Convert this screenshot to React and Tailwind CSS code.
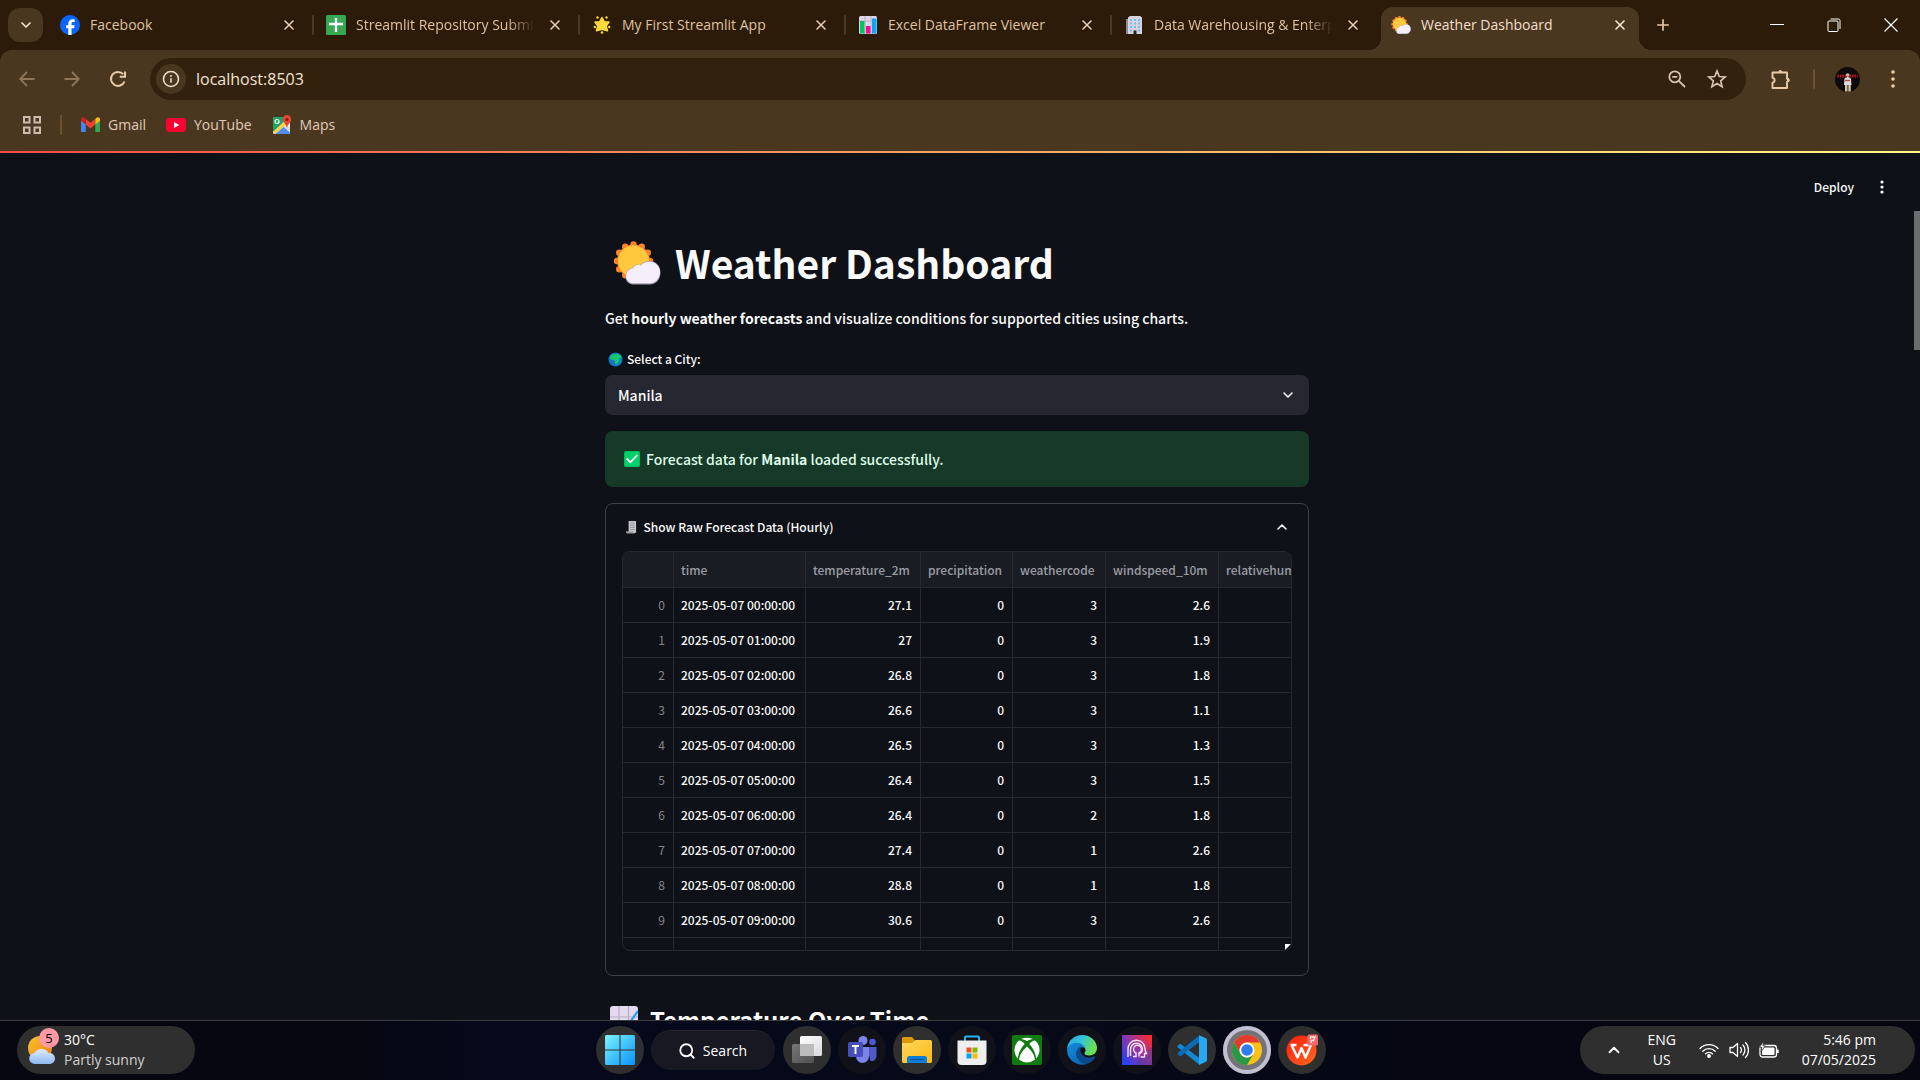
import React from "react";
import { ChevronDown, ChevronUp, X, Plus, Search } from "lucide-react";

const CHROME_FONT = "font-['Open_Sans','Noto_Sans',sans-serif]";
const PAGE_FONT = "font-['Noto_Sans_CJK_JP','Noto_Sans',sans-serif]";

/* ---------- emoji-style drawings ---------- */

function SunCloud({ className }) {
  const petals = Array.from({ length: 12 }, (_, i) => (i * Math.PI) / 6);
  return (
    <svg viewBox="0 0 48 48" className={className} aria-hidden="true">
      <g fill="#ff822d">
        <circle cx="20.500" cy="22" r="16.500" />
        {petals.map((a) => (
          <circle key={a} cx={20.5 + 16.5 * Math.cos(a)} cy={22 + 16.5 * Math.sin(a)} r="3.200" />
        ))}
      </g>
      <circle cx="20.500" cy="22" r="15.500" fill="#ffc83d" />
      <path d="M19 45.500a7.500 7.500 0 0 1-6.500-8c0-5 3.500-8 7-8.500 1-3.500 6-4.500 8-2.500 2-3.500 6-4.500 9-4.500 6 0 11 4.500 11 11.500S43 45.500 37 45.500z" fill="#a89bb5" />
      <path d="M19 44.200a7 7 0 0 1-6-7c0-4.500 3.500-7.500 7-8 1-3.500 6-4.500 8-2.500 2-3.500 6-4 8.500-4 6 0 10.500 4.500 10.500 10.500s-4.500 11-10 11z" fill="#f4effa" />
    </svg>
  );
}

function Globe({ className }) {
  return (
    <svg viewBox="0 0 16 16" className={className} aria-hidden="true">
      <circle cx="8" cy="8" r="7.500" fill="#0f76c9" />
      <path d="M3 3.500 6 2l3 .500 1.500-1L13 3l1.500 3-1.500 1-1-.5.500 2-2 3.500-1.500 1.500-1.500-1L7.500 10 6 8.500 3 8 2 6z" fill="#12c76f" />
      <path d="m12.500 10 1-.5-.5 2-1 .800z" fill="#12c76f" />
    </svg>
  );
}

function CheckBoxEmoji({ className }) {
  return (
    <svg viewBox="0 0 16 16" className={className} aria-hidden="true">
      <rect width="16" height="16" rx="1.500" fill="#00b25b" />
      <rect x=".7" y=".7" width="14.600" height="14.600" rx="1.200" fill="#00d26a" />
      <path d="m3.200 8 3.200 3.300 6.400-6.800" fill="none" stroke="#fff" strokeWidth="1.800" strokeLinecap="round" strokeLinejoin="round" />
    </svg>
  );
}

function Receipt({ className }) {
  return (
    <svg viewBox="0 0 12 16" className={className} aria-hidden="true">
      <path d="M3 1h8.500v13.500H10V15H1.500A1.500 1.500 0 0 1 0 13.500h3z" fill="#c9c9cc" />
      <path d="M0 13h8.500c0 1.200.5 2 1.500 2H1.500A1.500 1.500 0 0 1 0 13z" fill="#9a9aa0" />
      <path d="M4.500 3.500h5.500M4.500 6h5.500M4.500 8.500h5.500M4.500 11h5.500" stroke="#8c8c92" strokeWidth="1" />
    </svg>
  );
}

function ChartUp({ className }) {
  return (
    <svg viewBox="0 0 28 28" className={className} aria-hidden="true">
      <rect width="28" height="28" rx="3" fill="#e4dbee" />
      <path d="M0 11h28M0 20h28M9 0v28M18.500 0v28" stroke="#b9abc9" strokeWidth="1.200" />
      <path d="m2 27 7-5 6 1L28 5" fill="none" stroke="#26a0f0" strokeWidth="2.200" />
    </svg>
  );
}

/* ---------- tab icons ---------- */

function FacebookIcon() {
  return (
    <svg viewBox="0 0 20 20" className="size-5" aria-hidden="true">
      <circle cx="10" cy="10" r="10" fill="#0866ff" />
      <path d="M8.300 19.900v-6.600H6.200v-3h2.100V9c0-3.300 1.500-4.800 4.700-4.800.6 0 1.300.1 1.700.2v2.700h-1.200c-1.500 0-2 .6-2 2.100v1.100h3.100l-.5 3h-2.600v6.600z" fill="#fff" />
    </svg>
  );
}
function SheetIcon() {
  return (
    <svg viewBox="0 0 20 20" className="size-5" aria-hidden="true">
      <rect width="20" height="20" rx="1.500" fill="#34a853" />
      <path d="M8.800 3h2.400v4.800H17v2.400h-5.800V17H8.800v-6.800H3V7.800h5.800z" fill="#fff" />
    </svg>
  );
}
function StarIcon() {
  return (
    <svg viewBox="0 0 20 20" className="size-5" aria-hidden="true">
      <path d="m10 2.500 2.200 4.200 4.800.3-2.800 4 1.300 4.800-5.500-1.500-5.500 1.500L5.800 11 3 7l4.800-.3z" fill="#ffd93b" stroke="#ffd93b" strokeWidth="1.500" strokeLinejoin="round" />
      <g fill="#ffd93b">
        <circle cx="5.500" cy="2.500" r="1.200" /><circle cx="14.500" cy="2.500" r="1.200" />
        <circle cx="2.800" cy="12" r="1.200" /><circle cx="17.200" cy="12" r="1.200" />
        <circle cx="10" cy="17.500" r="1.300" />
      </g>
    </svg>
  );
}
function BarsIcon() {
  return (
    <svg viewBox="0 0 20 20" className="size-5" aria-hidden="true">
      <rect x="1" y="1" width="18" height="18" rx="1.500" fill="#dfd5e8" />
      <path d="M1 6h18M7 1v18M13 1v18" stroke="#bcaec9" />
      <path d="M2 6h4.500v12.500H2z" fill="#00c468" />
      <path d="M8 11h4.500v7.500H8z" fill="#f70a8d" />
      <path d="M14 3.500h4.500v15H14z" fill="#0aa7f5" />
    </svg>
  );
}
function OfficeIcon() {
  return (
    <svg viewBox="0 0 20 20" className="size-5" aria-hidden="true">
      <path d="M2 4h3v15H2z" fill="#8f8b95" />
      <path d="M4 2.500 6 1h10l2 1.500V19H4z" fill="#d8d3dd" />
      <path d="M6 4h2v2H6zm4 0h2v2h-2zm4 0h2v2h-2zM6 7.500h2v2H6zm4 0h2v2h-2zm4 0h2v2h-2zM6 11h2v2H6zm4 0h2v2h-2zm4 0h2v2h-2zM6 14.500h2v2H6zm8 0h2v2h-2z" fill="#6fbdf5" />
      <path d="M9.500 15.500h3V19h-3z" fill="#222" />
    </svg>
  );
}

const tabs = [
  { title: "Facebook", icon: <FacebookIcon /> },
  { title: "Streamlit Repository Submission", icon: <SheetIcon />, sep: true, fade: true },
  { title: "My First Streamlit App", icon: <StarIcon />, sep: true },
  { title: "Excel DataFrame Viewer", icon: <BarsIcon />, sep: true },
  { title: "Data Warehousing & Enterprise", icon: <OfficeIcon />, sep: true, fade: true },
  { title: "Weather Dashboard", icon: <SunCloud className="size-5" />, active: true },
];

function Tab({ tab }) {
  return (
    <div role="tab" aria-selected={!!tab.active} className={"relative flex h-full w-[266px] items-center " + (tab.active ? "ml-px" : "")}>
      {tab.active && (
        <div className="absolute inset-x-1 top-[7px] bottom-0 rounded-t-xl bg-[#4a3720]">
          <div className="absolute bottom-0 -left-3 size-3 bg-[radial-gradient(circle_at_top_left,transparent_12px,#4a3720_12px)]" />
          <div className="absolute bottom-0 -right-3 size-3 bg-[radial-gradient(circle_at_top_right,transparent_12px,#4a3720_12px)]" />
        </div>
      )}
      <div className={tab.sep ? "h-5 w-0.5 shrink-0 rounded bg-[#4d3a22]" : "w-0.5 shrink-0"} />
      <div className="relative ml-3 flex min-w-0 flex-1 items-center gap-2.5">
        <span className="shrink-0">{tab.icon}</span>
        <span
          className={
            "min-w-0 flex-1 overflow-hidden text-[14px] leading-5 whitespace-nowrap " +
            (tab.fade ? "[mask-image:linear-gradient(to_right,black_85%,transparent)] " : "") +
            (tab.active ? "text-[#f5dfcd]" : "text-[#dfc1a2]")
          }
        >
          {tab.title}
        </span>
        <button aria-label="Close tab" className={"mr-[13px] flex size-5 shrink-0 items-center justify-center " + (tab.active ? "text-[#fbe9da]" : "text-[#e6cdb4]")}>
          <X size={16} strokeWidth={2.400} />
        </button>
      </div>
    </div>
  );
}

function TabStrip() {
  return (
    <div className="flex h-[50px] items-center bg-[#2c1b09]">
      <button aria-label="Search tabs" className="mr-[3px] ml-2 flex h-[34px] w-[35px] shrink-0 items-center justify-center rounded-xl bg-[#4a3720] text-[#f5dfcd]">
        <ChevronDown size={16} strokeWidth={2.600} />
      </button>
      <div role="tablist" className="flex h-full min-w-0">
        {tabs.map((t) => <Tab key={t.title} tab={t} />)}
      </div>
      <button aria-label="New tab" className="ml-2 flex size-6 shrink-0 items-center justify-center text-[#e6c9a8]">
        <Plus size={18} strokeWidth={2.200} />
      </button>
      <div className="ml-auto flex text-white">
        <button aria-label="Minimize" className="flex h-10 w-[57px] items-center justify-center">
          <svg viewBox="0 0 14 14" className="w-3.5" aria-hidden="true"><path d="M0 6.500h14" stroke="currentColor" strokeWidth="1" /></svg>
        </button>
        <button aria-label="Restore" className="flex h-10 w-[57px] items-center justify-center">
          <svg viewBox="0 0 14 14" className="w-3.5" fill="none" stroke="currentColor" aria-hidden="true">
            <rect x="1" y="3" width="10" height="10.500" rx="1" />
            <path d="M3.500 1h8A1.500 1.500 0 0 1 13 2.500V11" />
          </svg>
        </button>
        <button aria-label="Close window" className="flex h-10 w-[58px] items-center justify-center">
          <svg viewBox="0 0 14 14" className="w-3.5" aria-hidden="true"><path d="m.5.500 13 13m0-13-13 13" stroke="currentColor" strokeWidth="1.200" /></svg>
        </button>
      </div>
    </div>
  );
}

function ArrowIcon({ flip }) {
  return (
    <svg viewBox="0 0 16 16" className={flip ? "size-4 rotate-180" : "size-4"} fill="none" stroke="currentColor" strokeWidth="1.800" aria-hidden="true">
      <path d="M15.500 8H1.500M8 1 1.200 8 8 15" />
    </svg>
  );
}

function Toolbar() {
  return (
    <div className="bg-[#2c1b09]">
      <div className="rounded-t-xl bg-[#4a3720] pt-2">
        <div className="flex h-[42px] items-center">
          <button aria-label="Back" className="flex w-[54px] justify-center text-[#8d7659]"><ArrowIcon /></button>
          <button aria-label="Forward" className="flex w-9 justify-center text-[#8d7659]"><ArrowIcon flip /></button>
          <button aria-label="Reload" className="flex w-[55px] justify-center text-[#e9cba9]">
            <svg viewBox="0 0 18 18" className="size-[18px]" fill="none" stroke="currentColor" strokeWidth="2" aria-hidden="true">
              <path d="M15.500 11.500a7 7 0 1 1-1.300-7.300" /><path d="M16 1.500v5.300h-5.300" />
            </svg>
          </button>
          <div className="ml-[5px] flex h-full min-w-0 flex-1 items-center rounded-full bg-[#32210d] pr-[17px] pl-1.5">
            <button aria-label="View site information" className="flex size-[30px] shrink-0 items-center justify-center rounded-full bg-[#4a3720] text-[#f0dccb]">
              <svg viewBox="0 0 18 18" className="size-[18px]" fill="none" stroke="currentColor" strokeWidth="1.600" aria-hidden="true">
                <circle cx="9" cy="9" r="7.500" /><path d="M9 8.200v4.600M9 5v1.800" />
              </svg>
            </button>
            <input aria-label="Address" defaultValue="localhost:8503" className="ml-2.5 min-w-0 flex-1 bg-transparent text-[16px] leading-6 text-[#f3e3d6] outline-none" />
            <button aria-label="Zoom" className="flex w-9 justify-center text-[#d9c3b4]">
              <svg viewBox="0 0 18 18" className="size-[18px]" fill="none" stroke="currentColor" strokeWidth="1.800" aria-hidden="true">
                <circle cx="6.800" cy="6.800" r="5.500" /><path d="M4.300 6.800h5M10.800 10.800l6.200 6.200" />
              </svg>
            </button>
            <button aria-label="Bookmark this page" className="ml-2.5 flex w-6 justify-center text-[#d9c3b4]">
              <svg viewBox="0 0 20 20" className="size-5" fill="none" stroke="currentColor" strokeWidth="1.700" aria-hidden="true">
                <path d="m10 2 2.300 5.500 5.900.5-4.500 3.900 1.400 5.800L10 14.600l-5.100 3.100 1.400-5.800L1.800 8l5.900-.5z" />
              </svg>
            </button>
          </div>
          <button aria-label="Extensions" className="ml-[23px] flex w-6 justify-center text-[#e9cba9]">
            <svg viewBox="0 0 22 22" className="size-[22px]" fill="none" stroke="currentColor" strokeWidth="1.900" strokeLinejoin="round" aria-hidden="true">
              <path d="M2.500 4.500H17v6.200a1.500 1.500 0 0 1 0 3V20H2.500v-5.200a2.600 2.600 0 0 0 0-5.100z" />
              <path d="M8.700 3.600a1.700 1.700 0 0 1 3.200 0zM18 10.500a1.700 1.700 0 0 1 0 3.300z" fill="currentColor" strokeWidth="1" />
            </svg>
          </button>
          <div className="ml-5 h-5 w-0.5 rounded bg-[#6b5233]" />
          <button aria-label="Profile" className="ml-5 size-[25px]">
            <svg viewBox="0 0 25 25" className="size-[25px]" aria-hidden="true">
              <circle cx="12.500" cy="12.500" r="12.500" fill="#0c0a0a" />
              <path d="M2.500 9h20" stroke="#b3161b" strokeWidth="3" strokeDasharray="1.600 .8" />
              <circle cx="12.700" cy="8" r="1.800" fill="#d6b7a2" />
              <path d="M9.500 11.500q3.200-3 6.400 0l.6 6.500h-7.500z" fill="#e2dedd" />
              <path d="M10 13.500h5" stroke="#c04a45" strokeWidth="1.500" />
              <path d="M10 18h2.500v6.500H10zm3.300 0h2.500v6.500h-2.500z" fill="#d1c3a6" />
            </svg>
          </button>
          <button aria-label="Chrome menu" className="mr-[15px] ml-[21px] flex w-6 justify-center text-[#f0cfa9]">
            <svg viewBox="0 0 4 18" className="h-[18px]" fill="currentColor" aria-hidden="true"><circle cx="2" cy="2" r="1.800" /><circle cx="2" cy="9" r="1.800" /><circle cx="2" cy="16" r="1.800" /></svg>
          </button>
        </div>
        <nav className="flex h-[51px] items-center pb-0.5 text-[14px] leading-5 text-[#e0ccb8]">
          <button aria-label="Apps" className="ml-[23px]">
            <svg viewBox="0 0 18 18" className="size-[18px]" fill="none" stroke="#cdbcab" strokeWidth="2" aria-hidden="true">
              <path d="M1 1h5.500v5.500H1zM11.500 1H17v5.500h-5.500zM1 11.500h5.500V17H1zM11.500 11.500H17V17h-5.500z" />
            </svg>
          </button>
          <div className="mx-[19px] h-5 w-0.5 rounded bg-[#6b5233]" />
          <a href="#gmail" className="flex items-center gap-2">
            <svg viewBox="0 0 20 16" className="w-[19px]" aria-hidden="true">
              <path d="M0 3v11.500A1.500 1.500 0 0 0 1.500 16H5V7z" fill="#4285f4" />
              <path d="M20 3v11.500a1.500 1.500 0 0 1-1.500 1.500H15V7z" fill="#34a853" />
              <path d="M15 2v6l5-4V2.500c0-2-2.300-3-3.800-1.600z" fill="#fbbc04" />
              <path d="M5 8V2l5 4 5-4v6l-5 4z" fill="#ea4335" />
              <path d="M0 2.500V4l5 4V2L3.800.9C2.300-.3 0 .6 0 2.500z" fill="#c5221f" />
            </svg>
            Gmail
          </a>
          <a href="#youtube" className="ml-5 flex items-center gap-2">
            <svg viewBox="0 0 20 14" className="w-5" aria-hidden="true"><rect width="20" height="14" rx="3.500" fill="#ff0033" /><path d="m8 4 5.300 3L8 10z" fill="#fff" /></svg>
            YouTube
          </a>
          <a href="#maps" className="ml-5 flex items-center gap-2">
            <svg viewBox="0 0 20 20" className="size-5" aria-hidden="true">
              <rect x="1" y="2" width="17" height="17" rx="1.500" fill="#f2f2f2" />
              <path d="M1 3.500A1.500 1.500 0 0 1 2.500 2H12v5L1 17z" fill="#1fa463" />
              <path d="m9.500 10 8.500 7.500c0 1-.5 1.500-1.500 1.500H3z" fill="#4f8df5" />
              <path d="M1 17 12 6.500l2.500 3L3.500 19H2.500z" fill="#fbd24c" />
              <path d="m12 12 2.500-2.500L18 13v3.500z" fill="#d8dadd" />
              <circle cx="5" cy="6.500" r="2" fill="none" stroke="#fff" strokeWidth="1.200" />
              <path d="M15 0a4.300 4.300 0 0 1 4.200 4.400c0 3-3.200 4-4.200 8.400-1-4.400-4.200-5.400-4.200-8.400A4.300 4.300 0 0 1 15 0z" fill="#ea4335" />
              <circle cx="15" cy="4.400" r="1.500" fill="#7a1d17" />
            </svg>
            Maps
          </a>
        </nav>
      </div>
    </div>
  );
}

/* ---------- page content ---------- */

const columns = ["time", "temperature_2m", "precipitation", "weathercode", "windspeed_10m", "relativehumidity_2m"];
const rows = [
  ["27.1", 3, "2.6"], ["27", 3, "1.9"], ["26.8", 3, "1.8"], ["26.6", 3, "1.1"], ["26.5", 3, "1.3"],
  ["26.4", 3, "1.5"], ["26.4", 2, "1.8"], ["27.4", 1, "2.6"], ["28.8", 1, "1.8"], ["30.6", 3, "2.6"],
];
const CELL = "border-r border-b border-[#262931] px-2 text-right";

function ForecastTable() {
  return (
    <div className="relative h-[400px] overflow-hidden rounded-lg border border-[#262931]">
      <table className="w-[760px] table-fixed border-separate border-spacing-0 text-[12px] leading-4 font-medium text-[#fafafa]">
        <colgroup>
          <col className="w-[51px]" /><col className="w-[132px]" /><col className="w-[115px]" /><col className="w-[92px]" />
          <col className="w-[93px]" /><col className="w-[113px]" /><col />
        </colgroup>
        <thead>
          <tr className="h-9 bg-[#1a1c24] text-[#9b9ca2]">
            <th className={CELL} />
            {columns.map((c) => <th key={c} scope="col" className="border-r border-b border-[#262931] px-[7px] text-left font-medium">{c}</th>)}
          </tr>
        </thead>
        <tbody>
          {rows.map(([temp, code, wind], i) => (
            <tr key={i} className="h-[35px]">
              <th scope="row" className="border-r border-b border-[#262931] px-2 text-right font-normal text-[#85868c]">{i}</th>
              <td className="border-r border-b border-[#262931] px-[7px] whitespace-nowrap">{`2025-05-07 0${i}:00:00`}</td>
              <td className={CELL}>{temp}</td>
              <td className={CELL}>0</td>
              <td className={CELL}>{code}</td>
              <td className={CELL}>{wind}</td>
              <td className={CELL} />
            </tr>
          ))}
          <tr className="h-[35px]">
            {Array.from({ length: 7 }, (_, i) => <td key={i} className={CELL} />)}
          </tr>
        </tbody>
      </table>
      <svg viewBox="0 0 6 6" className="absolute right-0 bottom-0 size-1.5" aria-hidden="true"><path d="M0 0h6L0 6z" fill="#fff" /></svg>
    </div>
  );
}

function Page() {
  return (
    <main className={"flex min-h-0 flex-1 flex-col overflow-hidden bg-[#0e1117] text-[#fafafa] " + PAGE_FONT}>
      <div className="h-0.5 shrink-0 bg-[linear-gradient(90deg,#ff4b4b,#fffd80)]" />
      <header className="flex h-[58px] shrink-0 items-center justify-end pt-2.5 pr-8">
        <button className="text-[12px] leading-5 font-medium">Deploy</button>
        <button aria-label="Main menu" className="ml-[22px] flex w-3 justify-center">
          <svg viewBox="0 0 4 14" className="h-3.5" fill="currentColor" aria-hidden="true"><circle cx="2" cy="2" r="1.600" /><circle cx="2" cy="7" r="1.600" /><circle cx="2" cy="12" r="1.600" /></svg>
        </button>
      </header>
      <div className="flex min-h-0 flex-1">
        <div className="min-w-0 flex-1">
          <div className="mx-auto max-w-[704px] pt-6">
            <h1 className="flex h-14 items-center gap-3.5 text-[39px] leading-none font-bold">
              <SunCloud className="ml-2 size-12 shrink-0" />
              <span className="pb-0.5">Weather Dashboard</span>
            </h1>
            <p className="mt-[15px] text-[14px] leading-6 font-medium">
              Get <strong className="font-bold">hourly weather forecasts</strong> and visualize conditions for supported cities using charts.
            </p>
            <label htmlFor="city" className="mt-[19px] flex items-center gap-1 pl-[3px] text-[12px] leading-5 font-medium">
              <Globe className="size-[15px]" />
              Select a City:
            </label>
            <div className="relative mt-1.5">
              <select id="city" defaultValue="Manila" className="h-10 w-full appearance-none rounded-lg bg-[#262730] px-[13px] text-[14px] font-medium outline-none">
                <option>Manila</option>
              </select>
              <ChevronDown size={16} strokeWidth={2.400} className="pointer-events-none absolute top-3 right-[13px]" />
            </div>
            <div role="alert" className="mt-4 flex h-14 items-center gap-1.5 rounded-lg bg-[#173928] px-[19px] text-[14px] font-medium text-[#dffde9]">
              <CheckBoxEmoji className="size-4" />
              <p>Forecast data for <strong className="font-bold">Manila</strong> loaded successfully.</p>
            </div>
            <details open className="mt-4 rounded-lg border border-[#3e4045] px-4 pb-6">
              <summary className="flex h-[47px] cursor-pointer list-none items-center gap-[7px] pb-0.5 pl-1 text-[12px] leading-5 font-medium">
                <Receipt className="h-3.5" />
                Show Raw Forecast Data (Hourly)
                <ChevronUp size={16} strokeWidth={2.400} className="mr-0.5 ml-auto" />
              </summary>
              <ForecastTable />
            </details>
            <h2 className="mt-6 flex h-10 items-center gap-3 pl-[5px] text-[24px] leading-none font-bold">
              <ChartUp className="size-7" />
              Temperature Over Time
            </h2>
          </div>
        </div>
        <div className="w-1.5 shrink-0"><div className="h-[139px] bg-[#6b6c70]" /></div>
      </div>
    </main>
  );
}

/* ---------- taskbar ---------- */

const StartIcon = () => (
  <svg viewBox="0 0 30 30" className="size-[30px]" aria-hidden="true">
    <defs><linearGradient id="win" x2="1" y2="1"><stop stopColor="#7cf3ff" /><stop offset="1" stopColor="#0a93fb" /></linearGradient></defs>
    <path d="M0 1.500Q0 0 1.500 0h13v14.500H0zM15.500 0h13Q30 0 30 1.500v13H15.500zM0 15.500h14.500V30h-13Q0 30 0 28.500zM15.500 15.500H30v13q0 1.500-1.500 1.500h-13z" fill="url(#win)" />
  </svg>
);
const TaskViewIcon = () => (
  <svg viewBox="0 0 30 30" className="size-[30px]" aria-hidden="true">
    <defs>
      <linearGradient id="tvA" x2="1" y2="1"><stop stopColor="#fff" /><stop offset="1" stopColor="#d9d9d9" /></linearGradient>
      <linearGradient id="tvB" x2="1" y2="1"><stop stopColor="#777" /><stop offset="1" stopColor="#505050" /></linearGradient>
    </defs>
    <rect x="0" y="9" width="22" height="19" rx="1.500" fill="url(#tvB)" />
    <rect x="8" y="1" width="22" height="20" rx="1.500" fill="url(#tvA)" />
    <path d="M8 9h14v12H9.500A1.500 1.500 0 0 1 8 19.500z" fill="#bdbdbd" />
  </svg>
);
const TeamsIcon = () => (
  <svg viewBox="0 0 30 30" className="size-[30px]" aria-hidden="true">
    <circle cx="25.500" cy="7" r="3.300" fill="#5059c9" />
    <path d="M20 12h9.500v9a5 5 0 0 1-6 5z" fill="#5059c9" />
    <circle cx="16" cy="5.500" r="4.500" fill="#7b83eb" />
    <path d="M9 12h13v9.500a6.500 6.500 0 0 1-13 0z" fill="#7b83eb" />
    <rect x="1" y="7" width="15" height="15" rx="1.500" fill="#464eb8" />
    <path d="M5 11h7M8.500 11v8" stroke="#fff" strokeWidth="1.900" />
  </svg>
);
const FolderIcon = () => (
  <svg viewBox="0 0 30 30" className="size-[30px]" aria-hidden="true">
    <defs><linearGradient id="fold" x2="1" y2="1"><stop stopColor="#ffd75e" /><stop offset="1" stopColor="#fdb913" /></linearGradient></defs>
    <path d="M0 3.500Q0 2 1.500 2H10l3 3.500V9H0z" fill="#dc9a08" />
    <path d="M0 8h10l3.500-3H28.500Q30 5 30 6.500v20q0 1.500-1.500 1.500h-27Q0 28 0 26.500z" fill="url(#fold)" />
    <path d="M5 28v-4.500A2.500 2.500 0 0 1 7.500 21h15a2.500 2.500 0 0 1 2.500 2.500V28z" fill="#0f7fd6" />
    <path d="M8.500 24.500h13" stroke="#0a5595" strokeWidth="1.200" />
  </svg>
);
const StoreIcon = () => (
  <svg viewBox="0 0 30 30" className="size-[30px]" aria-hidden="true">
    <path d="M8 6V2.500Q8 1.500 9 1.500h12q1 0 1 1V6" fill="none" stroke="#26b5ef" strokeWidth="2" />
    <path d="M.5 5.500h29V26a4 4 0 0 1-4 4h-21a4 4 0 0 1-4-4z" fill="#eeeeee" />
    <path d="M9.500 12.500h5v5h-5z" fill="#f25022" /><path d="M15.500 12.500h5v5h-5z" fill="#7fba00" />
    <path d="M9.500 18.500h5v5h-5z" fill="#00a4ef" /><path d="M15.500 18.500h5v5h-5z" fill="#ffb900" />
  </svg>
);
const XboxIcon = () => (
  <svg viewBox="0 0 30 30" className="size-[30px]" aria-hidden="true">
    <rect width="30" height="30" rx="2" fill="#107c10" />
    <g fill="#fff">
      <path d="M15 6.200C13 5 11 4.200 9 4.100Q15 1.300 21 4.100C19 4.200 17 5 15 6.200z" />
      <path d="M7 5.600C8.500 5.500 11 7 12.700 9 9 13 6 19 5.900 23.500 1 18.500 1.300 10 7 5.600z" />
      <path d="M23 5.600C21.500 5.500 19 7 17.300 9 21 13 24 19 24.100 23.500 29 18.500 28.700 10 23 5.600z" />
      <path d="M15 11.500C19 15 23 20.500 22.800 24.800Q19 27.600 15 27.600T7.200 24.800C7 20.500 11 15 15 11.500z" />
    </g>
  </svg>
);
const EdgeIcon = () => (
  <svg viewBox="0 0 30 30" className="size-[30px]" aria-hidden="true">
    <defs>
      <linearGradient id="edA" x2="1" y2=".4"><stop stopColor="#2aa5e4" /><stop offset=".5" stopColor="#33c3d9" /><stop offset="1" stopColor="#6ae04e" /></linearGradient>
      <linearGradient id="edB" x2="1" y2="1"><stop stopColor="#148fe0" /><stop offset="1" stopColor="#0b5cad" /></linearGradient>
    </defs>
    <path d="M0 14C1 5 8 0 15 0c9 0 15 6.500 15 13 0 5-4 7.500-8 7.500-3.500 0-5-1.200-4.500-2.500 1.500-2 1.500-4-.5-6C12 8 4 8.500 0 14z" fill="url(#edA)" />
    <path d="M0 15C1 9.500 6 7.500 10 7.700c4 .1 7 2.500 8 5.300-4-2.500-9 1-8.500 6.500.5 6 7 9.500 11.500 9A15 15 0 0 1 0 15z" fill="url(#edB)" />
    <path d="M14 11.500c-3 1-5 4-4.500 8 .8 6 7 9.500 11.500 9 3-1 6-3.500 7.300-6.300.3-.7-.3-1-.9-.7-6 2.500-13.900.2-14-6.500 0-1.500.2-2.500.6-3.500z" fill="#0c4a8c" />
  </svg>
);
const HeadIcon = () => (
  <svg viewBox="0 0 30 30" className="size-[30px]" aria-hidden="true">
    <defs><linearGradient id="hd" x1="0" y1=".8" x2="1" y2=".1"><stop stopColor="#2341f5" /><stop offset=".5" stopColor="#9a35a0" /><stop offset="1" stopColor="#ff2a2a" /></linearGradient></defs>
    <path d="M0 0h30v30H0z" fill="url(#hd)" />
    <path d="m18 22 12-10v18H14z" fill="#4b3c9c" opacity=".5" />
    <g fill="none" stroke="#f2e4f5" strokeWidth="1.400">
      <path d="M6 22v-8a8.500 8.500 0 0 1 17-.5c0 2 .5 3.500 1.500 5h-2V22h-4" />
      <path d="M8.500 21v-6.500a6 6 0 0 1 12-.5c0 2.500-1.500 4-3 5" />
      <path d="M11 21.500h3v-3.500a4 4 0 1 1 3 0v3.500" />
    </g>
  </svg>
);
const CodeIcon = () => (
  <svg viewBox="0 0 30 30" className="size-[30px]" aria-hidden="true">
    <path d="M.8 10.800 2.500 9.200q.7-.6 1.500 0L22 22.800V29.500L.8 12.300q-.7-.8 0-1.500z" fill="#1488d0" />
    <path d="M.8 19.300 2.500 20.900q.7.6 1.500 0L22 7.300V.5L.8 17.700q-.7.800 0 1.600z" fill="#0a6cb8" />
    <path d="M22 .3q-.4-.1 0 0L28.500 3Q30 3.600 30 5v20q0 1.400-1.500 2L22 29.900z" fill="#29a8f2" />
  </svg>
);
const ChromeIcon = () => (
  <svg viewBox="0 0 30 30" className="size-[30px]" aria-hidden="true">
    <circle cx="15" cy="15" r="15" fill="#fbc116" />
    <path d="M2 7.500A15 15 0 0 1 28 7.500H15a7.500 7.500 0 0 0-6.500 11.200z" fill="#e33b2e" />
    <path d="M2 7.500 8.500 18.700A7.500 7.500 0 0 0 21.500 18.700L15 30A15 15 0 0 1 2 7.500z" fill="#279847" />
    <circle cx="15" cy="15" r="7.500" fill="#fff" />
    <circle cx="15" cy="15" r="5.800" fill="#2d7df0" />
  </svg>
);
const WpsIcon = () => (
  <svg viewBox="0 0 32 32" className="size-8" aria-hidden="true">
    <defs><linearGradient id="wps" x2="1" y2="1"><stop stopColor="#ff1a10" /><stop offset="1" stopColor="#ff6a1c" /></linearGradient></defs>
    <circle cx="15.500" cy="16.500" r="15" fill="url(#wps)" />
    <path d="M10.500 11H5.500L11.500 23.500 15.500 14 19.500 23.500 25 11H17.500" fill="none" stroke="#fff" strokeWidth="2.400" strokeLinejoin="round" />
    <rect x="21.500" y=".5" width="10.500" height="11" rx="1.500" fill="#f0696b" />
    <path d="M24.500 5V3h4.500L27.500 6.500H25L25.500 9" fill="none" stroke="#ffe8e8" strokeWidth="1.300" />
  </svg>
);

const apps = [
  { name: "Microsoft Teams", icon: <TeamsIcon />, cls: "bg-[#111119]" },
  { name: "File Explorer", icon: <FolderIcon />, cls: "bg-[#2f2f2f]" },
  { name: "Microsoft Store", icon: <StoreIcon />, cls: "bg-[#111119]" },
  { name: "Xbox", icon: <XboxIcon />, cls: "bg-[#111119]" },
  { name: "Microsoft Edge", icon: <EdgeIcon />, cls: "bg-[#111119]" },
  { name: "Photo tool", icon: <HeadIcon />, cls: "bg-[#111119]" },
  { name: "Visual Studio Code", icon: <CodeIcon />, cls: "bg-[#2f2f2f]" },
  { name: "Google Chrome", icon: <ChromeIcon />, cls: "bg-[#737378] ring-[#c2bfd2] ring-4 ring-inset" },
  { name: "WPS Office", icon: <WpsIcon />, cls: "bg-[#2f2f2f]" },
];

function AppButton({ name, cls, children }) {
  return (
    <button aria-label={name} className={"flex size-12 shrink-0 items-center justify-center rounded-full " + cls}>
      {children}
    </button>
  );
}

function Taskbar() {
  return (
    <footer className="grid h-[60px] shrink-0 grid-cols-[1fr_auto_1fr] items-center border-t border-[#3b3b40] bg-[linear-gradient(90deg,#070711_0%,#070711_18%,#06091c_26%,#060918_50%,#060713_75%,#070711_100%)] pr-[5px] pb-px pl-1.5 text-white">
      <button className="relative ml-[11px] flex h-12 w-[178px] items-center rounded-full bg-[#2f2f2f] pl-2.5 text-left">
        <svg viewBox="0 0 30 30" className="size-[30px]" aria-hidden="true">
          <defs>
            <linearGradient id="sn" x2="1" y2="1"><stop stopColor="#f7c62d" /><stop offset="1" stopColor="#f07a14" /></linearGradient>
            <linearGradient id="cl" x2="0" y2="1"><stop stopColor="#dcebff" /><stop offset="1" stopColor="#8fb8f2" /></linearGradient>
          </defs>
          <circle cx="13" cy="13" r="12" fill="url(#sn)" />
          <path d="M8 29a5.500 5.500 0 0 1-.5-11C9 13.500 19 12 21.500 18c4-.5 6.500 2.500 6.500 5.500S25.500 29 22.500 29z" fill="url(#cl)" />
        </svg>
        <span className="absolute top-0.5 left-[22px] flex size-5 items-center justify-center rounded-full bg-[#ff99a4] text-[13px] leading-none text-black">5</span>
        <span className="ml-[7px] text-[14px] leading-5">
          <span className="block">30°C</span>
          <span className="block text-[#cfcfcf]">Partly sunny</span>
        </span>
      </button>

      <div className="flex items-center gap-[7px]">
        <AppButton name="Start" cls="bg-[#2f2f2f]"><StartIcon /></AppButton>
        <button className="mr-px flex h-10 w-[124px] items-center justify-center gap-[7px] rounded-full border-t border-[#26262f] bg-[#171822] text-[14px]">
          <Search size={18} strokeWidth={2.400} />
          Search
        </button>
        <AppButton name="Task view" cls="bg-[#2f2f2f]"><TaskViewIcon /></AppButton>
        {apps.map((a) => <AppButton key={a.name} name={a.name} cls={a.cls}>{a.icon}</AppButton>)}
      </div>

      <div className="flex h-12 items-center justify-self-end rounded-full bg-[#2f2f2f] pr-[39px] pl-[25px] text-[14px] leading-5">
        <button aria-label="Show hidden icons"><ChevronUp size={18} strokeWidth={2.400} /></button>
        <button className="ml-6 w-[30px] text-center">ENG<br />US</button>
        <button aria-label="Network, volume and battery" className="ml-[22px] flex items-center gap-2.5">
          <svg viewBox="0 0 20 16" className="w-5" fill="none" stroke="#fff" strokeWidth="1.400" strokeLinecap="round" aria-hidden="true">
            <path d="M1 6.500a12.500 12.500 0 0 1 18 0M3.800 9.200a8.700 8.700 0 0 1 12.400 0M6.600 11.800a4.900 4.900 0 0 1 6.800 0" />
            <circle cx="10" cy="14" r="1.200" fill="#fff" />
          </svg>
          <svg viewBox="0 0 20 18" className="w-5" fill="none" stroke="#fff" strokeWidth="1.300" strokeLinecap="round" strokeLinejoin="round" aria-hidden="true">
            <path d="M1 6.500h3L8.500 2.500v13L4 11.500H1zM11.500 6.500a4 4 0 0 1 0 5M14 4a7.500 7.500 0 0 1 0 10M16.500 1.500a11 11 0 0 1 0 15" />
          </svg>
          <svg viewBox="0 0 20 18" className="w-5" aria-hidden="true">
            <rect x="1" y="4.500" width="16.500" height="11.500" rx="2.500" fill="none" stroke="#fff" strokeWidth="1.300" />
            <rect x="3" y="6.500" width="12.500" height="7.500" rx="1" fill="#fff" />
            <path d="M18 8.500h1.700v3.500H18z" fill="#fff" />
            <path d="M4.500 0 .5 6.500h2.300L2 11l4.300-6.200H4z" fill="#fff" stroke="#2f2f2f" strokeWidth=".8" />
          </svg>
        </button>
        <button className="ml-[23px] text-right"><span className="block">5:46 pm</span><span className="block">07/05/2025</span></button>
      </div>
    </footer>
  );
}

export default function App() {
  return (
    <div className={"flex h-screen flex-col overflow-hidden bg-[#0e1117] " + CHROME_FONT}>
      <TabStrip />
      <Toolbar />
      <Page />
      <Taskbar />
    </div>
  );
}
